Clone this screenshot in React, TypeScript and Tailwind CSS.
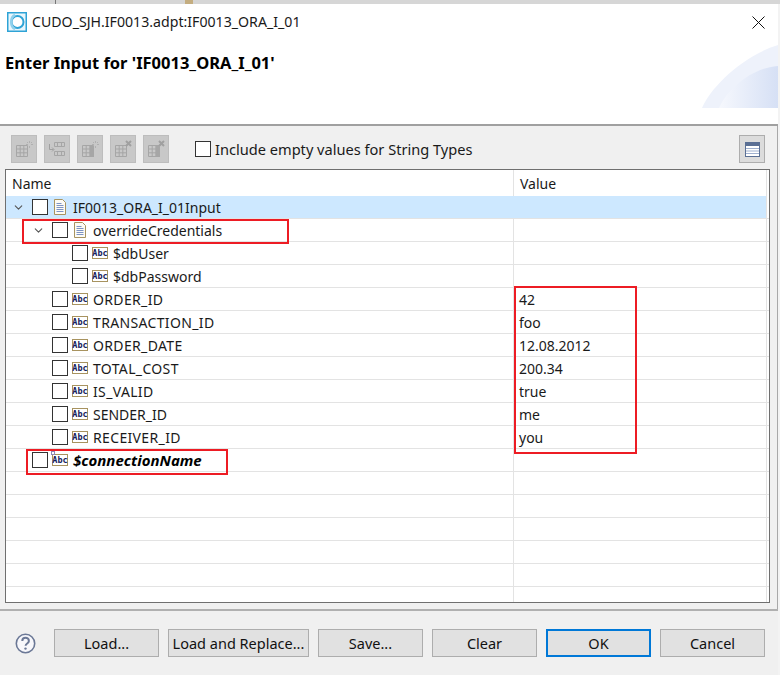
import { ChevronDown } from "lucide-react";

type Row = { name?: string; value?: string; depth?: number; kind?: "doc" | "abc"; open?: boolean; selected?: boolean; special?: boolean; caps?: boolean };

const rows: Row[] = [
  { name: "IF0013_ORA_I_01Input", depth: 0, kind: "doc", open: true, selected: true },
  { name: "overrideCredentials", depth: 1, kind: "doc", open: true },
  { name: "$dbUser", depth: 2, kind: "abc" },
  { name: "$dbPassword", depth: 2, kind: "abc" },
  { name: "ORDER_ID", value: "42", depth: 1, kind: "abc", caps: true },
  { name: "TRANSACTION_ID", value: "foo", depth: 1, kind: "abc", caps: true },
  { name: "ORDER_DATE", value: "12.08.2012", depth: 1, kind: "abc", caps: true },
  { name: "TOTAL_COST", value: "200.34", depth: 1, kind: "abc", caps: true },
  { name: "IS_VALID", value: "true", depth: 1, kind: "abc", caps: true },
  { name: "SENDER_ID", value: "me", depth: 1, kind: "abc" },
  { name: "RECEIVER_ID", value: "you", depth: 1, kind: "abc", caps: true },
  { name: "$connectionName", depth: 0, kind: "abc", special: true },
  {}, {}, {}, {}, {}, {},
];

const depthClass = ["pl-[26px]", "pl-[46px]", "pl-[66px]"];

const DocIcon = () => (
  <svg width="12" height="16" viewBox="0 0 12 16" className="shrink-0">
    <path d="M.5.5h8l3 3v12H.5z" fill="#fdfbf4" stroke="#a8935f" />
    <path d="M2.5 4.5h5M2.5 6.5h7M2.5 8.5h7M2.5 10.5h7M2.5 12.5h7" stroke="#7d93c4" />
  </svg>
);

const AbcIcon = () => (
  <svg width="16" height="12" viewBox="0 0 16 12" className="shrink-0">
    <rect x=".5" y=".5" width="15" height="11" fill="#fff" stroke="#a8935f" />
    <text x="8" y="9" textAnchor="middle" fontSize="8.5" fontWeight="700" fontFamily="'DejaVu Sans Mono', monospace" fill="#14215c">Abc</text>
  </svg>
);

const Check = () => <span className="block w-4 h-4 shrink-0 bg-white border border-[#333333]" />;

const TreeRow = ({ row }: { row: Row }) => {
  const hasContent = row.name !== undefined;
  return (
    <div className={`flex h-[23px] shrink-0 border-b border-[#e3e3e3] ${row.selected ? "bg-[#cde8ff]" : ""}`}>
      <div className={`flex items-center w-[508px] shrink-0 border-r border-[#e3e3e3] ${row.selected ? "border-transparent" : ""} ${depthClass[row.depth ?? 0]}`}>
        {hasContent && (
          <>
            {row.open && <ChevronDown size={13} strokeWidth={2} className="shrink-0 -ml-[20px] mr-[7px] text-[#555555]" />}
            <Check />
            {row.kind === "doc" ? (
              <span className="ml-[6px] mr-[7px] flex"><DocIcon /></span>
            ) : (
              <span className="relative ml-[4px] mr-[5px] flex">
                <AbcIcon />
                {row.special && <span className="absolute -left-px -top-[3px] w-[4px] h-[4px] bg-white border border-[#8f86b8]" />}
              </span>
            )}
            <span className={row.special ? "font-bold italic text-black text-[15px]" : row.caps ? "tracking-[0.35px]" : ""}>{row.name}</span>
          </>
        )}
      </div>
      <div className="flex items-center pl-[5px] flex-1">{row.value}</div>
      <div className="w-[3px] shrink-0 bg-white border-l border-[#e3e3e3]" />
    </div>
  );
};

const ToolIcon = ({ variant }: { variant: number }) => (
  <span className="flex items-center justify-center w-[26px] h-[28px] bg-[#c8c8c8] border border-[#bdbdbd]">
    <svg width="20" height="18" viewBox="0 0 20 18" fill="none">
      {variant === 1 ? (
        <>
          <path d="M7.5 2.5h10v4h-10zM10.5 2.5v4M14.5 2.5v4" stroke="#a6a6a6" />
          <path d="M7.5 11.5h10v4h-10zM10.5 11.5v4M14.5 11.5v4" stroke="#a6a6a6" />
          <path d="M2.5 4v5.5h4M5 7.5l2 2-2 2" stroke="#a0a0a0" />
        </>
      ) : (
        <>
          <path d="M2.5 5.5h11v11h-11zM2.5 9h11M2.5 12.8h11M6.2 5.5v11M9.8 5.5v11" stroke="#a6a6a6" />
          {variant >= 3 ? (
            <path d="M13 1l5 5M18 1l-5 5" stroke="#a0a0a0" strokeWidth="2" />
          ) : (
            <path d="M15.5 1v2M15.5 6v2M12 4.5h2M17 4.5h2M13 2l1 1M18 2l-1 1" stroke="#b0b0b0" />
          )}
          {(variant === 2 || variant === 4) && <path d="M10 6h4v11h-4z" fill="#a6a6a6" />}
        </>
      )}
    </svg>
  </span>
);

const FootButton = ({ label, wide, primary }: { label: string; wide?: boolean; primary?: boolean }) => (
  <button className={`h-[28px] pt-px bg-[#e1e1e1] text-[#111111] text-[14.5px] ${wide ? "w-[141px]" : "w-[105px]"} ${primary ? "border-2 border-[#0078d7]" : "border border-[#adadad]"}`}>
    {label}
  </button>
);

export default function App() {
  return (
    <div className="relative w-[780px] h-[675px] overflow-hidden bg-[#f3f3f3] font-['Noto_Sans','Open_Sans',sans-serif] text-[14px] text-[#1a1a1a]">
      <div className="h-[4px] bg-[#d6d6d6]" />
      <div className="relative w-[778px] h-[671px] flex flex-col bg-[#f0f0f0]">
        {/* title + banner */}
        <div className="relative h-[122px] shrink-0 bg-white border-b-2 border-[#a0a0a0]">
          <svg width="76" height="68" viewBox="0 0 76 68" className="absolute right-0 top-[38px]">
            <defs>
              <linearGradient id="banner" x1="0" x2="1" y1="0" y2="0">
                <stop offset="0" stopColor="#f6f8fd" />
                <stop offset="1" stopColor="#d6e0f5" />
              </linearGradient>
            </defs>
            <path d="M0 66C8 46 40 14 76 3v63z" fill="#eef2fb" />
            <path d="M17 66C26 46 50 26 76 24v42z" fill="url(#banner)" />
          </svg>
          <div className="flex items-center h-[36px] pl-[7px] pr-[13px]">
            <svg width="20" height="20" viewBox="0 0 20 20" className="shrink-0">
              <rect x=".75" y=".75" width="18.5" height="18.5" fill="#e9f6fc" stroke="#2ea3d6" strokeWidth="1.5" />
              <circle cx="10.5" cy="10" r="6" fill="#fff" stroke="#2ea3d6" strokeWidth="2" />
              <path d="M8 3C3 5 3 15 8 17" fill="none" stroke="#8fd0ec" strokeWidth="2.5" />
            </svg>
            <span className="ml-[5px] flex-1 text-[14.15px]">CUDO_SJH.IF0013.adpt:IF0013_ORA_I_01</span>
            <svg width="13" height="13" viewBox="0 0 13 13" className="shrink-0">
              <path d="M.5.5l12 12M12.5.5l-12 12" stroke="#111" />
            </svg>
          </div>
          <div className="pl-[5px] mt-[11px] font-bold text-black text-[16.5px]">Enter Input for 'IF0013_ORA_I_01'</div>
        </div>

        {/* toolbar */}
        <div className="flex items-center h-[43px] shrink-0 pl-[11px] pr-[12px] border-r border-[#a8a8a8] pt-[3px]">
          <div className="flex gap-[7px]">
            {[0, 1, 2, 3, 4].map((v) => <ToolIcon key={v} variant={v} />)}
          </div>
          <span className="ml-[26px]"><Check /></span>
          <span className="ml-[4px] mt-px flex-1 text-[14.6px]">Include empty values for String Types</span>
          <span className="flex items-center justify-center w-[26px] h-[28px] bg-[#dcdcdc] border border-[#adadad]">
            <svg width="15" height="15" viewBox="0 0 15 15">
              <rect x=".5" y=".5" width="14" height="14" fill="#fff" stroke="#5a6f94" />
              <rect x="1" y="1" width="13" height="3" fill="#5a6f94" />
              <path d="M1 6.5h13M1 9h13M1 11.5h13" stroke="#9fb0cf" />
            </svg>
          </span>
        </div>

        {/* tree table */}
        <div className="flex pl-[5px] pr-[7px] border-r border-[#a8a8a8] pb-[6px]">
          <div className="flex flex-col h-[434px] w-full overflow-hidden bg-white border border-[#6f6f6f]">
            <div className="flex h-[26px] shrink-0">
              <div className="flex items-center w-[508px] shrink-0 pl-[6px] border-r border-[#e3e3e3]">Name</div>
              <div className="flex items-center pl-[6px] flex-1">Value</div>
              <div className="w-[3px] shrink-0 border-l border-[#e3e3e3]" />
            </div>
            {rows.map((row, i) => <TreeRow key={i} row={row} />)}
          </div>
        </div>

        {/* footer */}
        <div className="flex items-center gap-[9px] flex-1 pl-[15px] pr-[13px] border-t-2 border-[#b0b0b0]">
          <svg width="21" height="21" viewBox="0 0 21 21" className="mr-[9px] shrink-0">
            <circle cx="10.5" cy="10.5" r="9.2" fill="#f7f7fb" stroke="#6b7896" strokeWidth="1.6" />
            <path d="M7.3 8c0-4.2 6.6-4.2 6.6 0 0 2.6-3.3 2.4-3.3 4.8" fill="none" stroke="#6b7896" strokeWidth="2" />
            <circle cx="10.5" cy="15.6" r="1.2" fill="#6b7896" />
          </svg>
          <FootButton label="Load..." />
          <FootButton label="Load and Replace..." wide />
          <FootButton label="Save..." />
          <FootButton label="Clear" />
          <FootButton label="OK" primary />
          <FootButton label="Cancel" />
        </div>
      </div>

      {/* bits of the window behind the dialog */}
      <div className="absolute left-[55px] top-0 w-px h-[4px] bg-[#777777]" />
      <div className="absolute left-[185px] top-0 w-[8px] h-[4px] bg-[#c4ad80]" />

      {/* annotations drawn on top of the screenshot */}
      <div className="absolute left-[22px] top-[219px] w-[267px] h-[25px] border-2 border-[#ed1c24]" />
      <div className="absolute left-[26px] top-[449px] w-[202px] h-[26px] border-2 border-[#ed1c24]" />
      <div className="absolute left-[514px] top-[286px] w-[123px] h-[168px] border-2 border-[#ed1c24]" />
    </div>
  );
}
